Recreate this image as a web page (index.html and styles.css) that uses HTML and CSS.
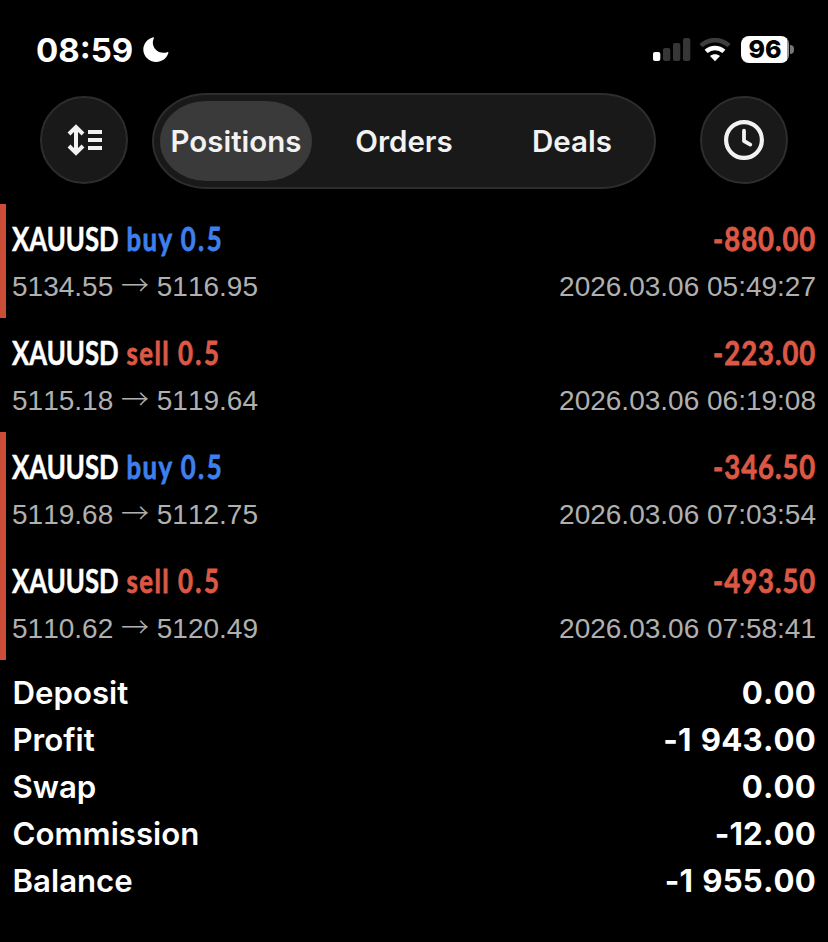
FILE: index.html
```
<!DOCTYPE html>
<html lang="en">
<head>
    <meta charset="UTF-8">
    <meta name="viewport" content="width=device-width, initial-scale=1.0">
    <title>History - Positions</title>
    <link rel="stylesheet" href="styles.css">
</head>
<body>
    <!-- Status bar -->
    <div class="status-bar">
        <div class="status-left">
            <span class="time">08:59</span>
            <svg class="moon" width="26" height="26" viewBox="0 0 26 26">
                <path fill="#fff" d="M9.6 0.4C10.6 0 11.2 0.7 10.8 1.6C9.9 3.5 9.6 5.5 10 7.6C11.2 13.3 16.6 16.7 22.3 15.7C23 15.6 23.6 15.4 24.3 15.2C25.1 14.9 25.6 15.5 25.3 16.3C23.3 21.7 18.7 25 13.2 25C6.1 25 0.3 19.5 0.3 12.6C0.3 6.9 4.1 2.1 9.6 0.4Z"/>
            </svg>
        </div>
        <div class="status-right">
            <svg class="signal" width="38" height="24" viewBox="0 0 38 24">
                <rect x="0" y="14" width="7.3" height="9" rx="2" fill="#fff"/>
                <rect x="10" y="10" width="7.3" height="13" rx="2" fill="#363636"/>
                <rect x="20" y="5" width="7.3" height="18" rx="2" fill="#363636"/>
                <rect x="30" y="0" width="7.3" height="23" rx="2" fill="#363636"/>
            </svg>
            <svg class="wifi" width="32" height="24" viewBox="0 0 32 24">
                <path d="M2 7.6C10 0.3 22 0.3 30 7.6" fill="none" stroke="#3d3d3d" stroke-width="4.6"/>
                <path d="M7.1 13.4C12.2 8.9 19.8 8.9 24.9 13.4" fill="none" stroke="#fff" stroke-width="4.6"/>
                <path d="M11 18C13.8 15.6 18.2 15.6 21 18L16 23.2Z" fill="#fff"/>
            </svg>
            <span class="battery">96</span>
            <span class="battery-tip"></span>
        </div>
    </div>

    <!-- Toolbar -->
    <div class="toolbar">
        <button type="button" class="round-button" aria-label="Sort">
            <svg width="36" height="32" viewBox="0 0 36 32" fill="none" stroke="#f2f2f2">
                <path d="M10 3.5V28.5" stroke-width="4"/>
                <path d="M3 10L10 3L17 10M3 22L10 29L17 22" stroke-width="4"/>
                <path d="M22 8H36M22 16H36M22 24H36" stroke-width="4"/>
            </svg>
        </button>
        <div class="tabs">
            <button type="button" class="tab active">Positions</button>
            <button type="button" class="tab">Orders</button>
            <button type="button" class="tab">Deals</button>
        </div>
        <button type="button" class="round-button" aria-label="Period">
            <svg width="40" height="40" viewBox="0 0 40 40" fill="none" stroke="#f2f2f2">
                <circle cx="20" cy="20" r="17.9" stroke-width="4.2"/>
                <path d="M20 10.7V21L26.3 24.6" stroke-width="3.8" stroke-linecap="round" stroke-linejoin="round"/>
            </svg>
        </button>
    </div>

    <!-- Closed positions -->
    <div class="positions">
        <div class="position stop">
            <div class="row">
                <div class="title"><span class="symbol">XAUUSD</span><span class="buy">buy <span class="volume">0.5</span></span></div>
                <div class="profit">-880.00</div>
            </div>
            <div class="row details">
                <div>5134.55 <span class="arrow">→</span> 5116.95</div>
                <div>2026.03.06 05:49:27</div>
            </div>
        </div>
        <div class="position">
            <div class="row">
                <div class="title"><span class="symbol">XAUUSD</span><span class="sell">sell <span class="volume">0.5</span></span></div>
                <div class="profit">-223.00</div>
            </div>
            <div class="row details">
                <div>5115.18 <span class="arrow">→</span> 5119.64</div>
                <div>2026.03.06 06:19:08</div>
            </div>
        </div>
        <div class="position stop">
            <div class="row">
                <div class="title"><span class="symbol">XAUUSD</span><span class="buy">buy <span class="volume">0.5</span></span></div>
                <div class="profit">-346.50</div>
            </div>
            <div class="row details">
                <div>5119.68 <span class="arrow">→</span> 5112.75</div>
                <div>2026.03.06 07:03:54</div>
            </div>
        </div>
        <div class="position stop">
            <div class="row">
                <div class="title"><span class="symbol">XAUUSD</span><span class="sell">sell <span class="volume">0.5</span></span></div>
                <div class="profit">-493.50</div>
            </div>
            <div class="row details">
                <div>5110.62 <span class="arrow">→</span> 5120.49</div>
                <div>2026.03.06 07:58:41</div>
            </div>
        </div>
    </div>

    <!-- Totals -->
    <div class="summary">
        <div class="total"><span>Deposit</span><span class="amount">0.00</span></div>
        <div class="total"><span>Profit</span><span class="amount">-1 943.00</span></div>
        <div class="total"><span>Swap</span><span class="amount">0.00</span></div>
        <div class="total"><span>Commission</span><span class="amount">-12.00</span></div>
        <div class="total"><span>Balance</span><span class="amount">-1 955.00</span></div>
    </div>
</body>
</html>
```
FILE: styles.css
```
* {
    box-sizing: border-box;
}

body {
    margin: 0;
    background-color: #000;
    color: #fff;
    font-family: Inter, "Liberation Sans", sans-serif;
    overflow: hidden;
}

/* Status bar */
.status-bar {
    display: flex;
    justify-content: space-between;
    align-items: center;
    height: 93px;
    padding: 6px 34px 0 36px;
}

.status-left,
.status-right {
    display: flex;
    align-items: center;
}

.time {
    font-size: 33px;
    font-weight: 750;
    line-height: 40px;
}

.moon {
    margin-left: 10px;
}

.wifi {
    margin-left: 8px;
}

.battery {
    width: 48px;
    height: 27px;
    margin-left: 10px;
    border-radius: 8px;
    background: linear-gradient(to right, #fff 46px, #999 46px);
    color: #000;
    font-size: 25px;
    font-weight: 850;
    line-height: 27px;
    text-align: center;
}

.battery-tip {
    width: 4px;
    height: 9px;
    margin-left: 1px;
    border-radius: 0 4px 4px 0;
    background-color: #777;
}

/* Toolbar */
.toolbar {
    display: flex;
    justify-content: space-between;
    align-items: center;
    height: 96px;
    padding: 0 40px;
}

.round-button {
    display: flex;
    align-items: center;
    justify-content: center;
    width: 88px;
    height: 88px;
    margin-bottom: 2px;
    padding: 0;
    border: 2px solid #2d2d2d;
    border-radius: 50%;
    background-color: #191919;
}

.tabs {
    display: flex;
    width: 504px;
    height: 96px;
    margin-right: 20px;
    padding: 6px 0 6px 6px;
    border: 2px solid #2d2d2d;
    border-radius: 54px / 48px;
    background-color: #191919;
}

.tab {
    flex: 0 0 168px;
    padding: 0;
    border: none;
    border-radius: 46px / 40px;
    background: none;
    color: #f2f2f2;
    font-family: inherit;
    font-size: 29.5px;
    font-weight: 600;
}

.tab.active {
    flex-basis: 152px;
    margin-right: 8px;
    background-color: #3a3a3a;
}

/* Closed positions */
.positions {
    margin-top: 15px;
}

.position {
    height: 114px;
    padding: 14px 12px 0 6px;
    border-left: 6px solid transparent;
}

.position.stop {
    border-left-color: #cb4c37;
}

.row {
    display: flex;
    justify-content: space-between;
    line-height: 40px;
}

/* Narrow lettering for the deal titles */
.title,
.profit {
    font-family: Lato, sans-serif;
    font-size: 33px;
    font-weight: 700;
    white-space: nowrap;
    -webkit-text-stroke: 0.8px currentColor;
}

.title {
    transform: scaleX(0.78);
    transform-origin: left;
}

.profit {
    color: #dc5845;
    letter-spacing: 1.2px;
    transform: scaleX(0.83);
    transform-origin: right;
}

.symbol {
    margin-right: 10px;
    -webkit-text-stroke-width: 0.5px;
}

.buy,
.sell {
    letter-spacing: 1.9px;
}

.buy {
    color: #3e7fee;
}

.sell {
    color: #dc5845;
}

.volume {
    letter-spacing: 3.2px;
}

.details {
    margin-top: 9px;
    color: #b0b0b0;
    font-family: "Liberation Sans", Arial, sans-serif;
    font-size: 28px;
    font-kerning: none;
}

.arrow {
    font-family: "Noto Sans CJK JP", sans-serif;
    font-weight: 300;
    line-height: 1;
}

/* Totals */
.summary {
    padding: 10px 12px 0 12.5px;
}

.total {
    display: flex;
    justify-content: space-between;
    height: 47px;
    font-size: 31.2px;
    font-weight: 560;
    line-height: 47px;
}

.amount {
    font-weight: 650;
    font-kerning: none;
    font-feature-settings: "calt" 0;
    letter-spacing: 0.2px;
    word-spacing: 1.5px;
}
```
